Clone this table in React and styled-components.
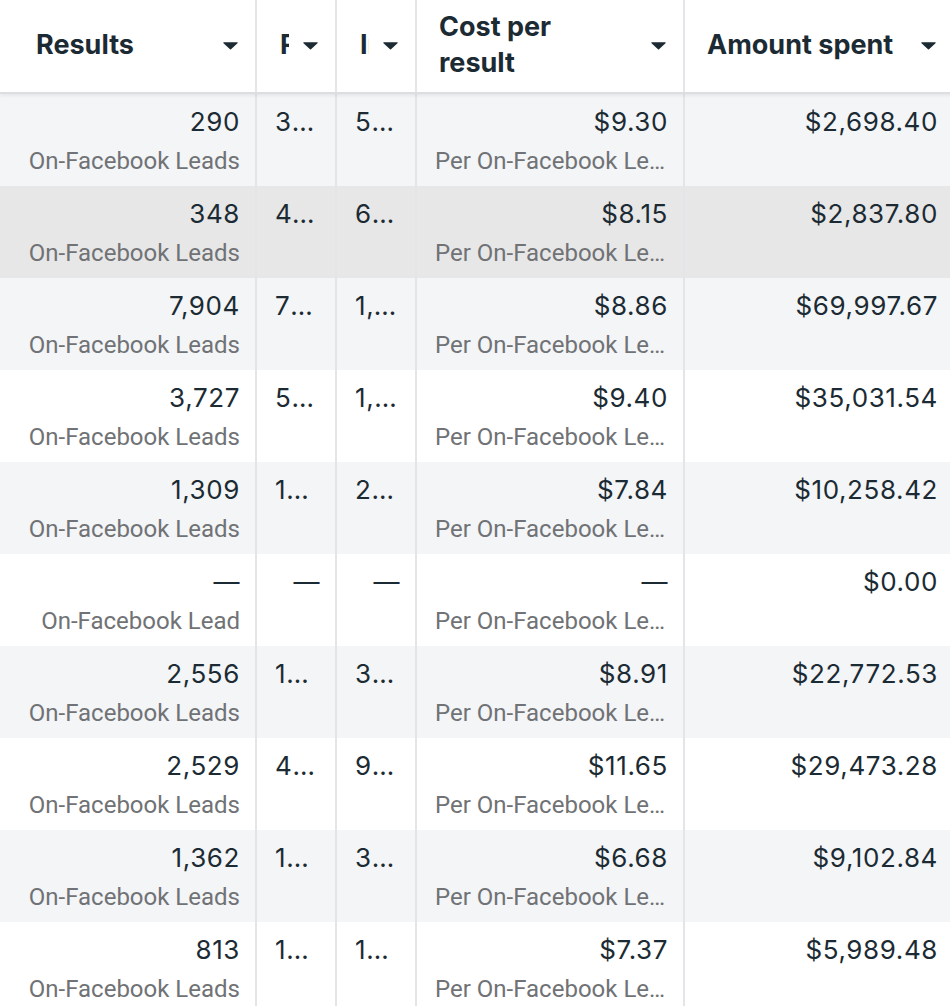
import React from 'react';
import styled, { createGlobalStyle } from 'styled-components';

const GlobalStyle = createGlobalStyle`
  html, body {
    margin: 0;
    padding: 0;
    background: #ffffff;
    overflow: hidden;
  }
  body {
    font-family: Inter, Roboto, 'Liberation Sans', sans-serif;
    color: #1c2b33;
  }
`;

const COLS = '257px 80px 80px 268px 268px';

const Table = styled.div`
  width: 953px;
  height: 1006px;
  overflow: hidden;
`;

const HeaderRow = styled.div`
  display: grid;
  grid-template-columns: ${COLS};
  height: 94px;
  background: #ffffff;
  border-bottom: 2px solid #dcdee2;
  box-sizing: border-box;
  box-shadow: 0 2px 3px rgba(0, 0, 0, 0.06);
  position: relative;
  z-index: 1;
`;

const HeaderCell = styled.div`
  display: flex;
  align-items: center;
  gap: 14px;
  padding: 0 17px 2px ${p => p.$padLeft || 22}px;
  border-right: ${p => (p.$last ? 'none' : '2px solid #e3e5e8')};
  min-width: 0;
  overflow: hidden;
`;

const HeaderLabel = styled.div`
  flex: 1;
  min-width: 0;
  overflow: hidden;
  white-space: ${p => (p.$wrap ? 'normal' : 'nowrap')};
  font-size: 27px;
  line-height: 36px;
  font-weight: 700;
  color: #1c2b33;
`;

const Caret = () => (
  <svg width="15" height="9" viewBox="0 0 15 9" style={{ flexShrink: 0 }}>
    <path d="M1 1.2h13c.6 0 .9.6.5 1L8 8.2a.7.7 0 0 1-1 0L.5 2.2c-.4-.4-.1-1 .5-1z" fill="#1c2b33" />
  </svg>
);

const Row = styled.div`
  display: grid;
  grid-template-columns: ${COLS};
  height: 92px;
  background: ${p => (p.$hover ? '#e7e7e7' : p.$shade ? '#f3f5f7' : '#ffffff')};
`;

const Cell = styled.div`
  padding: 11px 15px 0 18px;
  min-width: 0;
  text-align: right;
  border-right: ${p => (p.$last ? 'none' : '2px solid #e3e5e8')};
  overflow: hidden;
`;

const Value = styled.div`
  font-size: 26px;
  line-height: 34px;
  letter-spacing: 0.6px;
  color: #1c2b33;
  white-space: nowrap;
  overflow: hidden;
  text-overflow: ellipsis;
`;

const Sub = styled.div`
  margin-top: 6px;
  font-family: Roboto, 'Liberation Sans', sans-serif;
  font-size: 24px;
  line-height: 32px;
  color: #707275;
  white-space: nowrap;
  overflow: hidden;
  text-overflow: ellipsis;
`;

const rows = [
  { r: '290', sub: 'On-Facebook Leads', reach: '31,207', imp: '52,118', cpr: '$9.30', amt: '$2,698.40' },
  { r: '348', sub: 'On-Facebook Leads', reach: '41,992', imp: '62,540', cpr: '$8.15', amt: '$2,837.80', hover: true },
  { r: '7,904', sub: 'On-Facebook Leads', reach: '712,430', imp: '1,846,201', cpr: '$8.86', amt: '$69,997.67' },
  { r: '3,727', sub: 'On-Facebook Leads', reach: '521,004', imp: '1,203,877', cpr: '$9.40', amt: '$35,031.54' },
  { r: '1,309', sub: 'On-Facebook Leads', reach: '198,221', imp: '284,950', cpr: '$7.84', amt: '$10,258.42' },
  { r: '\u2014', sub: 'On-Facebook Lead', reach: '\u2014', imp: '\u2014', cpr: '\u2014', amt: '$0.00' },
  { r: '2,556', sub: 'On-Facebook Leads', reach: '176,330', imp: '352,118', cpr: '$8.91', amt: '$22,772.53' },
  { r: '2,529', sub: 'On-Facebook Leads', reach: '402,117', imp: '905,440', cpr: '$11.65', amt: '$29,473.28' },
  { r: '1,362', sub: 'On-Facebook Leads', reach: '154,870', imp: '318,392', cpr: '$6.68', amt: '$9,102.84' },
  { r: '813', sub: 'On-Facebook Leads', reach: '102,344', imp: '176,205', cpr: '$7.37', amt: '$5,989.48' },
];

export default function App() {
  return (
    <>
      <GlobalStyle />
      <Table>
        <HeaderRow>
          <HeaderCell $padLeft={36}>
            <HeaderLabel>Results</HeaderLabel>
            <Caret />
          </HeaderCell>
          <HeaderCell $padLeft={23}>
            <HeaderLabel>Reach</HeaderLabel>
            <Caret />
          </HeaderCell>
          <HeaderCell $padLeft={23}>
            <HeaderLabel>Impressions</HeaderLabel>
            <Caret />
          </HeaderCell>
          <HeaderCell>
            <HeaderLabel $wrap>Cost per<br />result</HeaderLabel>
            <Caret />
          </HeaderCell>
          <HeaderCell $last>
            <HeaderLabel>Amount spent</HeaderLabel>
            <Caret />
          </HeaderCell>
        </HeaderRow>
        {rows.map((row, i) => (
          <Row key={i} $shade={i % 2 === 0} $hover={row.hover}>
            <Cell>
              <Value>{row.r}</Value>
              <Sub>{row.sub}</Sub>
            </Cell>
            <Cell>
              <Value>{row.reach}</Value>
            </Cell>
            <Cell>
              <Value>{row.imp}</Value>
            </Cell>
            <Cell>
              <Value>{row.cpr}</Value>
              <Sub>Per On-Facebook Lead</Sub>
            </Cell>
            <Cell $last>
              <Value>{row.amt}</Value>
            </Cell>
          </Row>
        ))}
      </Table>
    </>
  );
}
